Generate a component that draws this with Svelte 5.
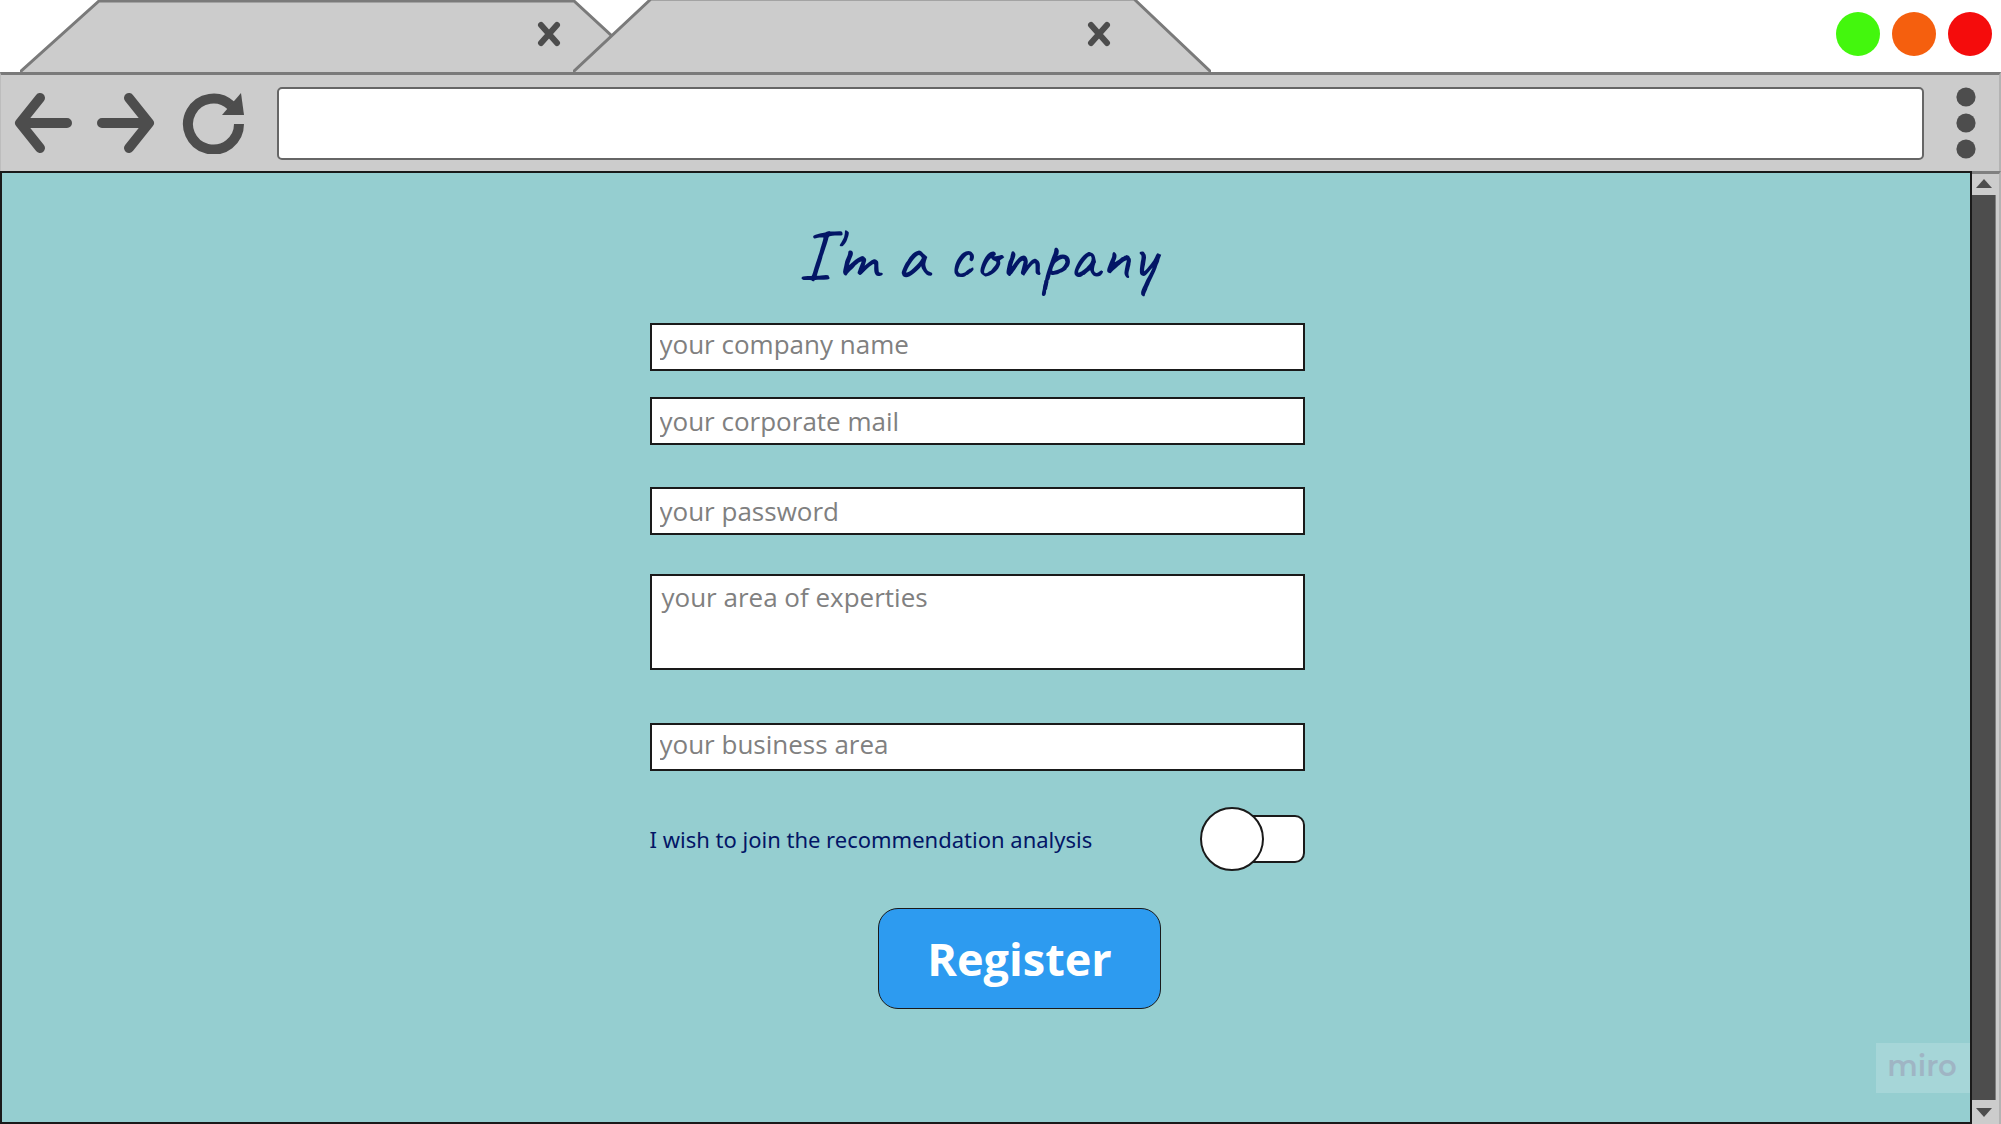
<script>
  const lights = ['green', 'orange', 'red'];
  const tabs = [
    { id: 'first', outline: 'M0 73 L79 1 H554 L631 73', box: '0 0 631 73' },
    { id: 'second', outline: 'M0 73 L78 -1 H561 L638 73', box: '0 0 638 73' }
  ];
  let company = $state('');
  let mail = $state('');
  let password = $state('');
  let expertise = $state('');
  let business = $state('');
  let joined = $state(false);
</script>

<div class="window">
  <header class="strip">
    <div class="tabs">
      {#each tabs as tab (tab.id)}
        <div class="tab {tab.id}">
          <svg class="shape" viewBox={tab.box} preserveAspectRatio="none" aria-hidden="true">
            <path d={tab.outline} fill="#cccccc" stroke="#7a7a7a" stroke-width="3" />
          </svg>
          <button class="icon close" aria-label="Close tab">
            <svg width="24" height="26" viewBox="0 0 24 26"><path d="M4 4 L20 22 M20 4 L4 22" stroke="#4d4d4d" stroke-width="6" stroke-linecap="round" /></svg>
          </button>
        </div>
      {/each}
    </div>
    <div class="lights">
      {#each lights as light}
        <button class="light {light}" aria-label="{light} window control"></button>
      {/each}
    </div>
  </header>

  <nav class="toolbar">
    <button class="icon" aria-label="Back">
      <svg width="58" height="62" viewBox="0 0 58 62" fill="none" stroke="#4d4d4d" stroke-width="10" stroke-linecap="round" stroke-linejoin="round"><path d="M26 6 L6 31 L26 56 M8 31 H53" /></svg>
    </button>
    <button class="icon" aria-label="Forward">
      <svg width="58" height="62" viewBox="0 0 58 62" fill="none" stroke="#4d4d4d" stroke-width="10" stroke-linecap="round" stroke-linejoin="round"><path d="M32 6 L52 31 L32 56 M50 31 H5" /></svg>
    </button>
    <button class="icon reload" aria-label="Reload">
      <svg width="64" height="62" viewBox="0 0 64 62">
        <path d="M57 32 A25.5 25.5 0 1 1 49 13.500" fill="none" stroke="#4d4d4d" stroke-width="10" />
        <path d="M59 1 L62 23 H40 Z" fill="#4d4d4d" />
      </svg>
    </button>
    <input class="address" type="text" aria-label="Address" />
    <button class="icon more" aria-label="Menu">
      <svg width="20" height="72" viewBox="0 0 20 72" fill="#4d4d4d"><circle cx="10" cy="10" r="9.6" /><circle cx="10" cy="36" r="9.6" /><circle cx="10" cy="62" r="9.6" /></svg>
    </button>
  </nav>

  <div class="body">
    <main class="page">
      <form onsubmit={(e) => e.preventDefault()}>
        <h1>I'm a company</h1>
        <input class="field high" type="text" aria-label="Company name" placeholder="your company name" bind:value={company} />
        <input class="field mail" type="email" aria-label="Corporate mail" placeholder="your corporate mail" bind:value={mail} />
        <input class="field password" type="password" aria-label="Password" placeholder="your password" bind:value={password} />
        <textarea class="field area" aria-label="Area of expertise" placeholder="your area of experties" bind:value={expertise}></textarea>
        <input class="field high business" type="text" aria-label="Business area" placeholder="your business area" bind:value={business} />
        <div class="join">
          <label for="join">I wish to join the recommendation analysis</label>
          <input id="join" class="switch" type="checkbox" role="switch" bind:checked={joined} />
        </div>
        <button class="register" type="submit">Register</button>
      </form>
      <div class="badge">miro</div>
    </main>
    <aside class="scroll">
      <button class="icon step" aria-label="Scroll up">
        <svg width="16" height="9" viewBox="0 0 16 9"><path d="M8 0 L16 9 H0 Z" fill="#4d4d4d" /></svg>
      </button>
      <div class="thumb"></div>
      <button class="icon step down" aria-label="Scroll down">
        <svg width="16" height="9" viewBox="0 0 16 9"><path d="M8 9 L16 0 H0 Z" fill="#4d4d4d" /></svg>
      </button>
    </aside>
  </div>
</div>

<style>
  :global(body) {
    margin: 0;
    background: #fff;
  }
  .window,
  .window * {
    box-sizing: border-box;
  }
  .window {
    min-height: 100vh;
    display: flex;
    flex-direction: column;
    font-family: "Open Sans", "Noto Sans", sans-serif;
  }
  .icon {
    display: flex;
    align-items: center;
    justify-content: center;
    padding: 0;
    border: 0;
    background: none;
    cursor: pointer;
  }
  .icon svg {
    display: block;
  }

  .strip {
    display: flex;
    justify-content: space-between;
    height: 72px;
  }
  .tabs {
    display: flex;
    flex: 0 1 1211px;
    padding-left: 20px;
  }
  .tab {
    position: relative;
    display: flex;
    align-items: center;
    justify-content: flex-end;
    padding-bottom: 4px;
  }
  .first {
    flex: 0 1 631px;
    padding-right: 90px;
  }
  .second {
    flex: 0 1 638px;
    margin-left: -78px;
    padding-right: 100px;
  }
  .shape {
    position: absolute;
    inset: 0;
    width: 100%;
    height: 100%;
  }
  .close {
    position: relative;
  }
  .lights {
    display: flex;
    align-items: center;
    gap: 12px;
    padding: 0 9px 4px 0;
  }
  .light {
    width: 44px;
    height: 44px;
    padding: 0;
    border: 0;
    border-radius: 50%;
  }
  .green { background: #43f70d; }
  .orange { background: #f55f0e; }
  .red { background: #f50c0c; }

  .toolbar {
    display: flex;
    align-items: center;
    height: 99px;
    padding: 0 23px 0 13px;
    gap: 25px;
    border-top: 3px solid #7a7a7a;
    border-right: 2px solid #b3b3b3;
    border-left: 1px solid #bdbdbd;
    background: #cccccc;
  }
  .reload {
    margin-left: 2px;
  }
  .address {
    flex: 1;
    min-width: 0;
    height: 73px;
    margin: 0 7px 0 6px;
    padding: 0 16px;
    border: 2px solid #666666;
    border-radius: 5px;
    background: #fff;
    font: 26px "Open Sans", "Noto Sans", sans-serif;
  }

  .body {
    flex: 1;
    display: flex;
  }
  .page {
    position: relative;
    flex: 1;
    padding: 42px 18px 96px 0;
    border: 2px solid #1a1a1a;
    background: #95ced0;
  }
  form {
    display: flex;
    flex-direction: column;
    width: 655px;
    max-width: 100%;
    margin: 0 auto;
  }
  h1 {
    margin: 0 0 28px;
    color: #031666;
    font: 500 74px/80px "Caveat", "Noto Sans", cursive;
    text-align: center;
  }
  .field {
    height: 48px;
    padding: 0 8px;
    border: 2px solid #1a1a1a;
    border-radius: 0;
    background: #fff;
    color: #333;
    font: 26px/36px "Open Sans", "Noto Sans", sans-serif;
  }
  .field::placeholder {
    color: #808080;
    opacity: 1;
  }
  .high { padding-bottom: 6px; }
  .mail { margin-top: 26px; }
  .password { margin-top: 42px; }
  .area {
    height: 96px;
    margin-top: 39px;
    padding: 3px 10px;
    resize: none;
  }
  .business { margin-top: 53px; }
  .join {
    display: flex;
    align-items: center;
    justify-content: space-between;
    height: 64px;
    margin-top: 36px;
  }
  label {
    color: #031666;
    font: 22px/32px "Noto Sans", sans-serif;
  }
  .switch {
    appearance: none;
    display: flex;
    align-items: center;
    width: 73px;
    height: 48px;
    margin: 0;
    border: 2px solid #1a1a1a;
    border-radius: 10px;
    background: #fff;
    cursor: pointer;
  }
  .switch::before {
    content: "";
    flex: none;
    width: 64px;
    height: 64px;
    margin-left: -34px;
    border: 2px solid #1a1a1a;
    border-radius: 50%;
    background: #fff;
    box-sizing: border-box;
  }
  .switch:checked::before { margin-left: 40px; }
  .register {
    align-self: center;
    width: 283px;
    height: 101px;
    margin: 37px 0 0 85px;
    padding: 0;
    border: 1px solid #1a1a1a;
    border-radius: 20px;
    background: #2d9bf0;
    color: #fff;
    font: 700 45px/60px "Open Sans", "Noto Sans", sans-serif;
    cursor: pointer;
  }
  .badge {
    position: absolute;
    right: 0;
    bottom: 29px;
    width: 94px;
    height: 50px;
    padding-right: 2px;
    background: #a6d6d8;
    color: #9fb5c4;
    font: 600 29px/46px Montserrat, Lato, sans-serif;
    text-align: center;
  }

  .scroll {
    display: flex;
    flex-direction: column;
    width: 29px;
    padding-right: 3px;
    border-top: 3px solid #808080;
    border-right: 2px solid #b3b3b3;
    background: #cccccc;
  }
  .step {
    height: 21px;
    padding-bottom: 2px;
  }
  .down {
    height: 24px;
    padding-bottom: 0;
  }
  .thumb {
    flex: 1;
    border-right: 1px solid #808080;
    background: #4d4d4d;
  }
</style>
